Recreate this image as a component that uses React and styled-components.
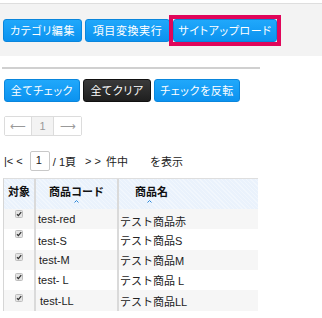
import React from 'react';
import styled, { createGlobalStyle, css } from 'styled-components';

const GlobalStyle = createGlobalStyle`
  body {
    margin: 0;
    background: #fff;
    font-family: "Liberation Sans", "Noto Sans CJK JP", sans-serif;
    font-size: 11px;
    color: #222;
  }
`;

const Page = styled.div`
  width: 322px;
  height: 318px;
  overflow: hidden;
  padding-top: 3px;
  box-sizing: border-box;
`;

const TopBand = styled.div`
  display: flex;
  gap: 3px;
  height: 53px;
  padding: 15px 0 0 3px;
  box-sizing: border-box;
  background: #f3f3f3;
  border-top: 1px solid #dedede;
`;

const Button = styled.button`
  height: 23px;
  width: ${p => p.$w}px;
  padding: 0;
  border-radius: 3px;
  font-family: "Noto Sans CJK JP", sans-serif;
  font-feature-settings: "palt" 1;
  font-size: 11px;
  letter-spacing: 0.6px;
  color: #fff;
  line-height: 21px;
  cursor: pointer;
  border: 1px solid #0a86dc;
  background: linear-gradient(#20a8fb, #0b92ef);
  ${p => p.$dark && css`
    border-color: #111;
    background: linear-gradient(#3a3a3a, #1f1f1f);
  `}
`;

const Highlight = styled.span`
  display: inline-flex;
  height: 23px;
  outline: 4px solid #e0065a;
  outline-offset: 0;
`;

const Rule = styled.div`
  width: 258px;
  height: 2px;
  margin: 11px 0 0 2px;
  background: #d0d0d0;
`;

const ActionRow = styled.div`
  display: flex;
  gap: 3px;
  margin: 10px 0 0 4px;
`;

const Pager = styled.div`
  display: flex;
  width: 78px;
  height: 20px;
  margin: 14px 0 0 4px;
  border: 1px solid #dcdcdc;
  border-radius: 2px;
  box-sizing: border-box;
`;

const PagerCell = styled.div`
  width: ${p => p.$w}px;
  display: flex;
  align-items: center;
  justify-content: center;
  color: #999;
  font-size: 11px;
  background: ${p => (p.$active ? '#f3f3f3' : '#fff')};
  & + & {
    border-left: 1px solid #dcdcdc;
  }
`;

const NavLine = styled.div`
  display: flex;
  align-items: center;
  height: 20px;
  margin: 15px 0 0 4px;
  font-size: 11px;
  color: #222;
`;

const NavText = styled.span`
  margin-left: ${p => p.$ml || 0}px;
  white-space: pre;
`;

const PageInput = styled.div`
  width: 20px;
  height: 20px;
  box-sizing: border-box;
  margin-left: 7px;
  padding-left: 5px;
  border: 1px solid #c8c8c8;
  border-radius: 2px;
  line-height: 17px;
`;

const Table = styled.div`
  width: 255px;
  margin: 7px 0 0 3px;
`;

const HeadRow = styled.div`
  display: grid;
  grid-template-columns: 30px 83px 1fr;
  height: 30px;
  border-top: 1px solid #dedede;
  border-left: 1px solid #d6d6d6;
  background-color: #eaf2fc;
  background-image: repeating-linear-gradient(45deg, rgba(255,255,255,0.35) 0 1px, transparent 1px 3px);
`;

const HeadCell = styled.div`
  position: relative;
  display: flex;
  align-items: center;
  justify-content: ${p => p.$align || 'center'};
  padding-left: ${p => p.$pl || 0}px;
  padding-bottom: 6px;
  font-family: "Noto Sans CJK JP", sans-serif;
  font-weight: bold;
  font-size: 11px;
  line-height: 1.1;
  color: #111;
  & + & {
    border-left: 2px solid #dadada;
  }
`;

const CaretMark = styled.svg`
  position: absolute;
  bottom: 6px;
  left: ${p => p.$x}px;
`;

const Caret = ({ x }) => (
  <CaretMark $x={x} width="5" height="3" viewBox="0 0 5 3">
    <path d="M0.5 2.5 L2.5 0.5 L4.5 2.5" fill="none" stroke="#2a86d8" strokeWidth="1" />
  </CaretMark>
);

const Row = styled.div`
  display: grid;
  grid-template-columns: 30px 83px 1fr;
  height: ${p => p.$h}px;
  border-left: 1px solid #d6d6d6;
  background: ${p => (p.$striped ? '#f6f6f6' : '#fff')};
`;

const Cell = styled.div`
  display: flex;
  align-items: center;
  padding-left: ${p => p.$pl || 0}px;
  padding-top: ${p => p.$dy || 0}px;
  font-family: "Liberation Sans", "Noto Sans CJK JP", sans-serif;
  font-size: 11px;
  color: #222;
  & + & {
    border-left: 2px solid #dadada;
  }
`;

const CheckCell = styled(Cell)`
  justify-content: center;
  align-items: flex-start;
  padding-top: ${p => p.$dy}px;
`;

const Check = () => (
  <svg width="8" height="8" viewBox="0 0 8 8">
    <rect x="0.5" y="0.5" width="7" height="7" rx="1" fill="#e4e4e4" stroke="#bdbdbd" />
    <path d="M2 4.2 L3.4 5.6 L6.2 2.2" fill="none" stroke="#333" strokeWidth="1.3" />
  </svg>
);

const items = [
  { code: 'test-red', name: 'テスト商品赤', h: 20, cy: 1, dy: -2, ny: 3, cpl: 2 },
  { code: 'test-S', name: 'テスト商品S', h: 21, cy: 1, dy: 3, ny: -1, cpl: 2 },
  { code: 'test-M', name: 'テスト商品M', h: 20, cy: 3, dy: 0, ny: 0, cpl: 3 },
  { code: 'test- L', name: 'テスト商品 L', h: 20, cy: 3, dy: 0, ny: 0, cpl: 2 },
  { code: 'test-LL', name: 'テスト商品LL', h: 21, cy: 4, dy: 0, ny: 1, cpl: 4 },
];

const App = () => {
  return (
    <Page>
      <GlobalStyle />
      <TopBand>
        <Button $w={79}>カテゴリ編集</Button>
        <Button $w={85}>項目変換実行</Button>
        <Highlight>
          <Button $w={104}>サイトアップロード</Button>
        </Highlight>
      </TopBand>
      <Rule />
      <ActionRow>
        <Button $w={76}>全てチェック</Button>
        <Button $w={68} $dark>全てクリア</Button>
        <Button $w={86}>チェックを反転</Button>
      </ActionRow>
      <Pager>
        <PagerCell $w={27}>⟵</PagerCell>
        <PagerCell $w={23} $active>1</PagerCell>
        <PagerCell $w={28}>⟶</PagerCell>
      </Pager>
      <NavLine>
        <NavText>{'|< <'}</NavText>
        <PageInput>1</PageInput>
        <NavText $ml={3}>/ 1頁</NavText>
        <NavText $ml={9}>{'> >'}</NavText>
        <NavText $ml={5}>件中</NavText>
        <NavText $ml={22}>を表示</NavText>
      </NavLine>
      <Table>
        <HeadRow>
          <HeadCell>対象</HeadCell>
          <HeadCell>
            商品コード
            <Caret x={38} />
          </HeadCell>
          <HeadCell $align="flex-start" $pl={16}>
            商品名
            <Caret x={28} />
          </HeadCell>
        </HeadRow>
        {items.map((item, i) => (
          <Row key={item.code} $h={item.h} $striped={i % 2 === 0}>
            <CheckCell $dy={item.cy}>
              <Check />
            </CheckCell>
            <Cell $pl={item.cpl} $dy={item.dy}>{item.code}</Cell>
            <Cell $pl={1} $dy={item.ny}>{item.name}</Cell>
          </Row>
        ))}
      </Table>
    </Page>
  );
};

export default App;
